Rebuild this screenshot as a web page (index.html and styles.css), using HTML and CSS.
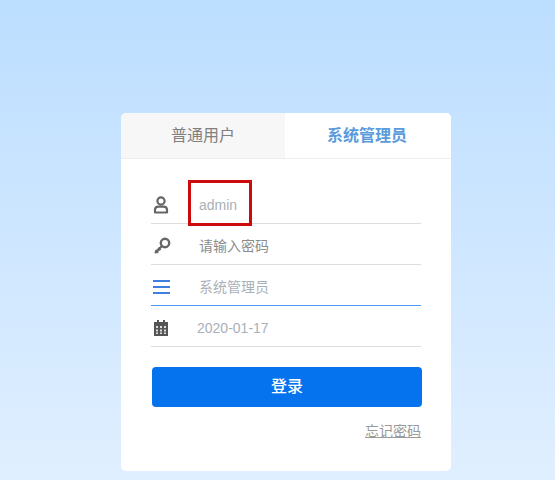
FILE: index.html
```html
<!DOCTYPE html>
<html lang="zh">
<head>
<meta charset="utf-8">
<title>登录</title>
<link rel="stylesheet" href="styles.css">
</head>
<body>
<main class="card">
  <div class="tabs">
    <div class="tab first">普通用户</div>
    <div class="tab active">系统管理员</div>
  </div>
  <form class="form">
    <div class="row">
      <svg class="icon user" viewBox="0 0 16 18" width="16" height="18"><circle cx="8" cy="5" r="3.6" fill="none" stroke="#666" stroke-width="2.2"/><path d="M2 16.500v-2.700C2 11.600 3.600 10.600 5.600 10.600h4.800c2 0 3.600 1 3.600 3.200v2.700Z" fill="none" stroke="#666" stroke-width="2.2" stroke-linejoin="round"/></svg>
      <span class="value">admin</span>
      <span class="mark"></span>
    </div>
    <div class="row">
      <svg class="icon key" viewBox="0 0 18 18" width="18" height="18"><circle cx="12" cy="6" r="4.2" fill="none" stroke="#666" stroke-width="2.4"/><path d="M8.800 9.200 2 16M2.600 13l2.600 2.800M5.200 10.800l2.200 2.400" fill="none" stroke="#666" stroke-width="2.2"/></svg>
      <span class="value dark shift">请输入密码</span>
    </div>
    <div class="row focus">
      <svg class="icon menu" viewBox="0 0 17 16" width="17" height="16"><path d="M0 2h17M0 8h17M0 14h17" stroke="#3f7fe0" stroke-width="2"/></svg>
      <span class="value shift">系统管理员</span>
    </div>
    <div class="row">
      <svg class="icon cal" viewBox="0 0 14 16" width="14" height="16"><path d="M0 2h3V0h2v2h4V0h2v2h3v14H0Z" fill="#555"/><path d="M2 6h2v2H2ZM6 6h2v2H6ZM10 6h2v2h-2ZM2 9.500h2v2H2ZM6 9.500h2v2H6ZM10 9.500h2v2h-2ZM2 12.500h2v1.500H2ZM6 12.500h2v1.500H6ZM10 12.500h2v1.500h-2Z" fill="#ddd"/></svg>
      <span class="value date">2020-01-17</span>
    </div>
    <button class="submit" type="button">登录</button>
    <div class="links"><a class="forgot" href="#">忘记密码</a></div>
  </form>
</main>
</body>
</html>
```
FILE: styles.css
```css
* { box-sizing: border-box; }
html, body { height: 100%; }
body {
  margin: 0;
  padding: 113px 0 9px 121px;
  overflow: hidden;
  background: linear-gradient(180deg, #bcdeff 0%, #e0efff 100%);
  font-family: "Liberation Sans", "Noto Sans CJK SC", sans-serif;
}
.card {
  width: 330px;
  height: 358px;
  background: #fff;
  border-radius: 5px;
  overflow: hidden;
}
.tabs {
  display: flex;
  height: 46px;
  border-bottom: 1px solid #eee;
}
.tab {
  flex: 1;
  padding-right: 2px;
  background: #fff;
  color: #777;
  font-size: 16px;
  line-height: 45px;
  text-align: center;
}
.tab.first {
  flex: none;
  width: 164px;
  padding-right: 0;
  background: #f7f7f7;
  color: #808080;
}
.tab.active {
  color: #5b9bdc;
  font-weight: 700;
}
.form {
  display: flex;
  flex-direction: column;
  padding: 24px 30px 0;
}
.row {
  position: relative;
  display: flex;
  align-items: center;
  height: 41px;
  padding-top: 3px;
  border-bottom: 1px solid #ddd;
}
.row.focus { border-bottom-color: #4a9cf0; }
.icon { flex: none; }
.icon.user { margin: 0 30px 0 2px; }
.icon.key { margin: 0 28px 0 2px; }
.icon.menu { margin: 0 29px 0 2px; }
.icon.cal { margin: 0 29px 0 3px; }
.value {
  color: #aab0b8;
  font-size: 14px;
}
.value.dark { color: #8c8c8c; }
.value.shift { margin-bottom: 2px; }
.mark {
  position: absolute;
  left: 37px;
  top: -3px;
  width: 64px;
  height: 46px;
  border: 3px solid #cc0c0c;
}
.submit {
  margin: 20px -1px 0 1px;
  height: 40px;
  padding: 0 0 5px;
  border: 0;
  border-radius: 4px;
  background: #0573ee;
  color: #fff;
  font: 500 16px "Liberation Sans", "Noto Sans CJK SC", sans-serif;
}
.links {
  display: flex;
  justify-content: flex-end;
  margin-top: 13px;
}
.forgot {
  color: #999;
  font-size: 14px;
  text-decoration: underline;
}
```
